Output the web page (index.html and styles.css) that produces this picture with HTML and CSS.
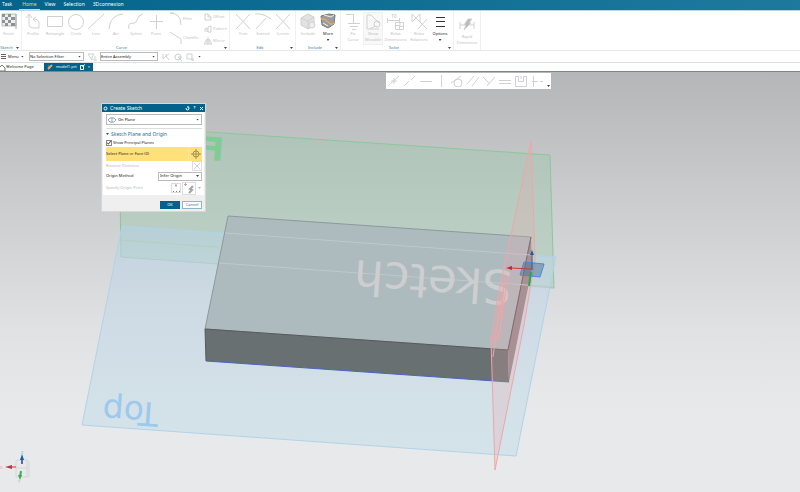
FILE: index.html
```html
<!DOCTYPE html>
<html lang="en">

<head>
    <meta charset="UTF-8">
    <meta name="viewport" content="width=device-width, initial-scale=1.0">
    <title>Create Sketch</title>
    <link rel="stylesheet" href="styles.css">
</head>

<body>
    <nav class="menu-tabs">
        <a href="#task" class="first">Task</a>
        <a href="#home" class="active">Home</a>
        <a href="#view">View</a>
        <a href="#selection">Selection</a>
        <a href="#connexion">3Dconnexion</a>
    </nav>

    <!-- Ribbon -->
    <header class="ribbon">
        <section class="group group-sketch">
            <div class="tools">
                <button class="tool"><svg width="16" height="17" viewBox="0 0 16 17"><path d="M1 1h14v12H1z" fill="#eee" stroke="#bbb"/><path d="M1 1h3v3H1zM7 1h3v3H7zM4 4h3v3H4zM10 4h4v3h-4zM1 7h3v3H1zM7 7h3v3H7zM4 10h3v3H4zM10 10h4v3h-4z" fill="#8f9193" stroke="none"/><path d="M15 1v15" stroke="#aaa"/></svg>Finish</button>
            </div>
            <h2>Sketch</h2><i class="corner"></i>
        </section>

        <section class="group group-curve">
            <div class="tools">
                <button class="tool wide"><svg width="16" height="17" viewBox="0 0 16 17"><path d="M4 2v9q0 4 5 4h5V9q-1-3-5-3M1 5l3-4 3 4M11 4L8 6l3 3"/></svg>Profile</button>
                <button class="tool wide"><svg width="16" height="17" viewBox="0 0 16 17"><path d="M.5 3.5h15v10H.5z"/></svg>Rectangle</button>
                <button class="tool"><svg width="16" height="17" viewBox="0 0 16 17"><circle cx="8" cy="9" r="7.5"/></svg>Circle</button>
                <button class="tool"><svg width="16" height="17" viewBox="0 0 16 17"><path d="M0 16L16 1"/></svg>Line</button>
                <button class="tool"><svg width="16" height="17" viewBox="0 0 16 17"><path d="M1 16Q2 2 15 1"/></svg>Arc</button>
                <button class="tool"><svg width="16" height="17" viewBox="0 0 16 17"><path d="M1 16C-1 6 7 14 9 7Q10 2 15 1"/></svg>Spline</button>
                <button class="tool"><svg width="16" height="17" viewBox="0 0 16 17"><path d="M8.5 2v14M2 8.5h13"/></svg>Point</button>
                <div class="stack stack-large">
                    <button><svg width="12" height="14" viewBox="0 0 12 14"><path d="M0 1q11 0 11 12M0 1h4"/></svg>Fillet</button>
                    <button><svg width="12" height="14" viewBox="0 0 12 14"><path d="M0 1l11 7v5"/></svg>Chamfer</button>
                </div>
                <div class="stack">
                    <button><svg width="8" height="8" viewBox="0 0 8 8"><path d="M1 1h3l3 3v3H1zM4 1v3h3"/></svg>Offset</button>
                    <button><svg width="8" height="8" viewBox="0 0 8 8"><path d="M1 7V4l2-1v4M4 7V2l3-1v6z"/></svg>Pattern</button>
                    <button><svg width="8" height="8" viewBox="0 0 8 8"><path d="M0 7l3-5v5zM4 0v8M5 7V2l3 5z"/></svg>Mirror</button>
                </div>
            </div>
            <h2>Curve</h2><i class="corner"></i>
        </section>

        <section class="group group-edit">
            <div class="tools">
                <button class="tool"><svg width="16" height="17" viewBox="0 0 16 17"><path d="M1 1l14 15M15 1L1 16"/></svg>Trim</button>
                <button class="tool"><svg width="16" height="17" viewBox="0 0 16 17"><path d="M1 16L11 5M0 1q8-1 16 5"/></svg>Extend</button>
                <button class="tool"><svg width="16" height="17" viewBox="0 0 16 17"><path d="M1 1l14 15M15 1L1 16"/></svg>Corner</button>
            </div>
            <h2>Edit</h2><i class="corner"></i>
        </section>

        <section class="group group-include">
            <div class="tools">
                <button class="tool"><svg width="16" height="17" viewBox="0 0 16 17"><path d="M1 5l7-4 6 3v9l-6 3-7-4z" fill="#e2e2e2"/><path d="M1 5l7 3 6-4M8 8v8"/><circle cx="12" cy="12" r="3" fill="#eee"/></svg>Include</button>
                <button class="tool enabled"><svg width="16" height="17" viewBox="0 0 16 17"><path d="M1 3l8-2 6 1-1 9-6 4-6-3z" fill="#9a9ea0" stroke="#777"/><path d="M1 5q4-1 7 3t6 1" stroke="#e08a6a"/><path d="M1 6q4-1 7 3t6 1" stroke="#e8c25c"/><path d="M4 2l7 2 3-2M3 10l5 3" stroke="#eee"/></svg>More<i class="drop"></i></button>
            </div>
            <h2>Include</h2><i class="corner"></i>
        </section>

        <section class="group group-solve">
            <div class="tools">
                <button class="tool"><svg width="16" height="17" viewBox="0 0 16 17"><path d="M1 1.5h7.5v9M3 10.5h12M5 13.5h8M7 16.5h4"/></svg>Fix<br>Curve</button>
                <button class="tool framed"><svg width="16" height="17" viewBox="0 0 16 17"><path d="M2 2h4l8 8M2 2v14h12M6 2l5 5"/><circle cx="12" cy="11" r="3"/><path d="M10 13l-5 3"/></svg>Show<br>Movable</button>
                <button class="tool dims"><svg width="20" height="17" viewBox="0 0 20 17"><text x="5" y="5" class="icon-text">10</text><path d="M1.5 5v5M13.5 5v4M1 7.5h12M9.5 9.5h8v7h-8zM9.5 12.5h4v4M14 9.5v4h4"/></svg>Relax<br>Dimensions</button>
                <button class="tool wide"><svg width="16" height="17" viewBox="0 0 16 17"><path d="M1 1v8l8-8v8zM5 5l11 11M16 6L7 16"/></svg>Relax<br>Relations</button>
                <button class="tool enabled"><svg width="16" height="17" viewBox="0 0 16 17"><path d="M4 4.5h9M4 8.5h9M4 13.5h9" stroke="#333"/></svg>Options<i class="drop"></i></button>
            </div>
            <h2>Solve</h2><i class="corner"></i>
        </section>

        <section class="group group-rapid">
            <div class="tools">
                <button class="tool rapid"><svg width="16" height="17" viewBox="0 0 16 17"><path d="M1 6v7M15 6v7M1 9h4M11 9h4"/><path d="M9 3h4l-3 4h2l-7 7 2-5H5z" fill="#bbb"/></svg>Rapid<br>Dimension</button>
            </div>
        </section>
    </header>

    <!-- Selection bar -->
    <div class="selection-bar">
        <button class="menu-button"><svg width="5" height="6" viewBox="0 0 5 6"><path d="M0 .5h5M0 2.5h5M0 4.5h5" stroke="#666"/></svg>Menu<i class="drop"></i></button>
        <label class="picker"><select aria-label="Selection filter"><option>No Selection Filter</option></select></label>
        <svg width="10" height="8" viewBox="0 0 10 8"><path d="M0 1h6L4 4v3L2 4zM7 3v4M5 7h4"/></svg>
        <label class="picker scope"><select aria-label="Selection scope"><option>Entire Assembly</option></select></label>
        <div class="bar-icons">
            <svg width="8" height="8" viewBox="0 0 8 8"><path d="M1 1v5l3-3 3 4M4 1v2l3-2"/></svg>
            <svg width="8" height="8" viewBox="0 0 8 8"><circle cx="4" cy="4" r="3"/><path d="M4 4l4 4M4 4h4"/></svg>
            <svg width="8" height="8" viewBox="0 0 8 8"><path d="M1 1h5v5H1zM5 7h3M7 5v3"/></svg>
            <i class="drop"></i>
        </div>
    </div>

    <nav class="file-tabs">
        <a href="#welcome"><svg width="6" height="7" viewBox="0 0 6 7"><path d="M0 3l2-2 3 3v3H0" stroke="#777"/></svg>Welcome Page</a>
        <a href="#model" class="current"><svg width="6" height="6" viewBox="0 0 6 6"><path d="M1 1l2 4" stroke="#58a"/><path d="M1 5l4-4" stroke="#f0a35a" stroke-width="2"/></svg>model1.prt<svg width="5" height="6" viewBox="0 0 5 6"><path d="M.5 1.5h3v4h-3zM2 2.5l3-2" stroke="#fff"/></svg><span>×</span></a>
    </nav>

    <main class="viewport">
        <svg class="scene" viewBox="0 72 800 420" preserveAspectRatio="xMinYMin slice">
            <defs>
                <linearGradient id="water" x1="0" y1="0" x2="0" y2="1">
                    <stop offset="0" stop-color="#b5d3e4" stop-opacity=".55"/>
                    <stop offset=".3" stop-color="#c5d8e6" stop-opacity=".65"/>
                    <stop offset="1" stop-color="#cadfe9" stop-opacity=".65"/>
                </linearGradient>
            </defs>

            <!-- datum planes -->
            <path d="M119 126L550 155l4 133-433-31z" fill="#9cc9ab" fill-opacity=".42" stroke="#8cc79b"/>
            <text class="plane-name front" transform="translate(223 161) rotate(4) scale(-1 1)">Front</text>
            <path d="M122 226l434 31-40 199-434-31z" fill="url(#water)" stroke="#afd3ea"/>
            <path d="M120 240l98 7" stroke="#b9cdb9"/>
            <text class="plane-name top" transform="translate(159 403) rotate(184)">Top</text>

            <!-- solid block -->
            <path d="M228 216l303 21-23 113-303-21z" fill="#adbabe" stroke="#8d9a9b"/>
            <path d="M205 329l303 21 1 32-303-21z" fill="#687071" stroke="none"/>
            <path d="M531 237l1 31-23 114-1-32z" fill="#92898c" stroke="none"/>
            <path d="M205 329l303 21 23-113" stroke="#59595d"/>
            <path d="M206 361l303 21" stroke="#4c63c4"/>
            <path d="M205 329l1 32" stroke="#555c60"/>
            <path d="M225 233l306 22M219 263l335 24" stroke="#c0c8ca"/>
            <text class="plane-name sketch" transform="translate(513 271) rotate(184)">Sketch</text>

            <!-- side plane, seen nearly edge on -->
            <path d="M531 141l-20 94-12 55-8 50 4 130 29-145 11-65z" fill="#eba6ad" fill-opacity=".25" stroke="#f0a6a8"/>
            <path d="M505 277l-5 38-8 28M504 282l-4 49-6 13M501 295l-8 62M508 276l-10 64" stroke="#eea7a5"/>

            <!-- csys at the corner -->
            <path d="M524 262l20 2-4 13-20-2z" fill="#4f7395" fill-opacity=".5" stroke="#478bd9"/>
            <path d="M510 268l22 1" stroke="#cf3945"/>
            <path d="M506 268l6-2v4z" fill="#c62835" stroke="none"/>
            <path d="M532 252v18" stroke="#245f9e"/>
            <path d="M530 255l2-5 2 5z" fill="#205da2" stroke="none"/>
            <path d="M531 272l-2 14" stroke="#27a650" stroke-width="2"/>

            <!-- view triad -->
            <path d="M16 461l2-1h9l2 2v14l-2 1H16zM27 460v17M16 468h12" stroke="#d3d6d8"/>
            <path d="M22 464v-6" stroke="#5569ad" stroke-width="2"/>
            <path d="M20 460l2-6 2 6z" fill="#11629b" stroke="none"/>
            <path d="M16 467H8" stroke="#c23643"/>
            <path d="M5 467l7-2v4z" fill="#c23643" stroke="none"/>
            <path d="M21 471l-1 6" stroke="#38ad50" stroke-width="2"/>
            <path d="M18 475h4l-2 5z" fill="#38ad50" stroke="none"/>
            <text class="axis x" x="0" y="469">X</text>
            <text class="axis y" x="18" y="483">Y</text>
            <text class="axis z" x="21" y="454">Z</text>
        </svg>

        <div class="snap-bar">
            <svg width="12" height="12" viewBox="0 0 12 12"><path d="M0 11L11 1M3 6h6M6 3v6"/></svg>
            <svg width="12" height="12" viewBox="0 0 12 12"><path d="M0 11l5-5M7 5l4-4"/></svg>
            <svg width="12" height="12" viewBox="0 0 12 12"><path d="M0 6.5h12"/></svg>
            <i class="split"></i>
            <svg width="12" height="12" viewBox="0 0 12 12"><circle cx="7" cy="8" r="4"/><path d="M0 8l10-7"/></svg>
            <svg width="12" height="12" viewBox="0 0 12 12"><path d="M0 9l7-8M5 11l7-9"/></svg>
            <svg width="12" height="12" viewBox="0 0 12 12"><path d="M0 2l7 7M4 11l8-9"/></svg>
            <svg width="12" height="12" viewBox="0 0 12 12"><path d="M0 5.5h12M0 8.5h12"/></svg>
            <svg width="12" height="12" viewBox="0 0 12 12"><path d="M.5 1.5h3v5h5v-5h3v10H.5zM6 1v3"/></svg>
            <svg width="12" height="12" viewBox="0 0 12 12"><path d="M2.5 1v11M1 6.5h6M9 6.5h3"/></svg>
            <i class="drop"></i>
        </div>

        <form class="dialog">
            <header class="dialog-title">
                <svg width="5" height="5" viewBox="0 0 5 5"><circle cx="2.5" cy="2.5" r="1.5" stroke="#fff"/></svg>
                <h1>Create Sketch</h1>
                <button type="button" aria-label="Reset"><svg width="5" height="5" viewBox="0 0 5 5"><path d="M1 2q0 2 1.5 2T4 2 2 1" stroke="#fff"/></svg></button>
                <button type="button">?</button>
                <button type="button" aria-label="Close"><svg width="5" height="5" viewBox="0 0 5 5"><path d="M1 1l3 3M4 1L1 4" stroke="#fff"/></svg></button>
            </header>
            <div class="dialog-body">
                <label class="picker type">
                    <svg width="8" height="6" viewBox="0 0 8 6"><path d="M0 3l2-2h4l2 2-2 2H2zM4 0v6" stroke="#8fadb2"/></svg>
                    <select aria-label="Sketch type"><option>On Plane</option></select>
                </label>
                <hr>
                <h3><i class="drop"></i>Sketch Plane and Origin</h3>
                <label class="check"><input type="checkbox" checked>Show Principal Planes</label>
                <div class="row selected">
                    <span>Select Plane or Face (0)</span>
                    <button type="button" aria-label="Select plane"><svg width="10" height="10" viewBox="0 0 10 10"><circle cx="5" cy="5" r="3" stroke="#a58d50"/><path d="M5 0v10M0 5h10" stroke="#a58d50"/></svg></button>
                </div>
                <div class="row disabled">
                    <span>Reverse Direction</span>
                    <button type="button" class="boxed" aria-label="Reverse direction"><svg width="8" height="8" viewBox="0 0 8 8"><path d="M1 1l6 6M7 1L1 7"/></svg></button>
                </div>
                <div class="row">
                    <label for="origin">Origin Method</label>
                    <span class="picker origin"><select id="origin"><option>Infer Origin</option></select></span>
                </div>
                <div class="row disabled tall">
                    <span>Specify Origin Point</span>
                    <div class="point-tools">
                        <button type="button" class="boxed" aria-label="Point dialog"><svg width="8" height="10" viewBox="0 0 8 10"><path d="M3 2.5h2M4 1v3" stroke="#d79aa2"/><path d="M1 8.5h1M4 8.5h1M7 8.5h1" stroke="#777"/></svg></button>
                        <button type="button" class="boxed infer" aria-label="Inferred point"><svg width="12" height="12" viewBox="0 0 12 12"><path d="M1 2.5h3M2.5 1v3" stroke="#d79aa2"/><path d="M10 4L7 7l2 1-3 3" stroke="#a5a5a5" stroke-width="2"/></svg></button>
                        <i class="drop"></i>
                    </div>
                </div>
            </div>
            <footer>
                <button type="button" class="ok">OK</button>
                <button type="button" class="cancel">Cancel</button>
            </footer>
        </form>
    </main>
</body>

</html>
```

FILE: styles.css
```css
* {
    box-sizing: border-box;
}

body {
    margin: 0;
    min-height: 100vh;
    display: flex;
    flex-direction: column;
    background: #fff;
    color: #222;
    font-family: "Noto Sans", "Open Sans", sans-serif;
    font-size: 4px;
    line-height: 6px;
}

button {
    display: flex;
    align-items: center;
    padding: 0;
    border: 0;
    background: none;
    color: inherit;
    font: inherit;
}

a {
    color: inherit;
    text-decoration: none;
}

h1, h2, h3 {
    margin: 0;
    font-weight: normal;
}

svg {
    flex: none;
    fill: none;
    stroke: #cfd1d2;
}

.drop {
    flex: none;
    width: 3px;
    height: 2px;
    background: #444;
    clip-path: polygon(0 0, 100% 0, 50% 100%);
}

/* top menu */
.menu-tabs {
    display: flex;
    gap: 2px;
    height: 11px;
    background: linear-gradient(90deg, #04648b, #1d7a9d);
    border-bottom: 1px solid #b9d3df;
    color: #fff;
    font-size: 5px;
    line-height: 9px;
}

.menu-tabs a {
    padding: 0 3px;
}

.menu-tabs .first {
    padding: 0 5px 0 2px;
}

.menu-tabs .active {
    color: #f3d774;
    border-bottom: 1px solid #f3d774;
}

/* ribbon */
.ribbon {
    display: flex;
    height: 40px;
    border-bottom: 1px solid #e6e7e8;
}

.group {
    position: relative;
    display: flex;
    flex-direction: column;
    justify-content: space-between;
    border-right: 1px solid #f0f0f1;
}

.group h2 {
    padding-right: 8px;
    color: #31809c;
    font-size: 4px;
    line-height: 4px;
    text-align: center;
}

.corner {
    position: absolute;
    right: 2px;
    bottom: 1px;
    width: 3px;
    height: 2px;
    background: #444;
    clip-path: polygon(0 0, 100% 0, 50% 100%);
}

.group-sketch {
    width: 22px;
}

.group-curve {
    width: 208px;
}

.group-edit {
    width: 66px;
    padding-left: 3px;
}

.group-include {
    width: 45px;
    padding-left: 2px;
}

.group-solve {
    width: 113px;
    padding-left: 2px;
}

.group-rapid {
    width: 27px;
}

.tools {
    display: flex;
    height: 34px;
    padding-top: 1px;
}

.tool {
    flex: none;
    flex-direction: column;
    width: 20px;
    color: #bfc0c1;
    text-align: center;
    padding-top: 1px;
}

.group-sketch .tool {
    width: 17px;
}

.tool.wide {
    width: 22px;
}

.tool.dims {
    width: 25px;
}

.tool.rapid {
    width: 26px;
    padding-top: 4px;
}

.tool svg {
    margin-bottom: 1px;
}

.tool.enabled {
    color: #222;
}

.enabled .drop {
    margin-top: 2px;
}

.framed {
    background: #f8f8f8;
    border: 1px solid #efefef;
}

.framed svg {
    margin-top: -1px;
}

.icon-text {
    fill: #b9bbbc;
    stroke: none;
    font-size: 5px;
}

.stack {
    display: flex;
    flex-direction: column;
    justify-content: space-between;
    padding: 1px 0 0 5px;
    color: #bfc0c1;
}

.stack button {
    gap: 1px;
}

.stack-large {
    width: 33px;
    padding: 0 0 0 4px;
}

/* selection bar */
.selection-bar {
    display: flex;
    align-items: center;
    height: 12px;
    border-bottom: 1px solid #dedfe0;
}

.menu-button {
    gap: 2px;
    width: 29px;
    padding-left: 1px;
}

.picker {
    position: relative;
    display: flex;
    align-items: center;
    width: 55px;
    height: 9px;
    border: 1px solid #b9babb;
    background: #fff;
}

.picker::after {
    content: "";
    position: absolute;
    right: 2px;
    width: 3px;
    height: 2px;
    background: #444;
    clip-path: polygon(0 0, 100% 0, 50% 100%);
}

.picker select {
    flex: 1;
    min-width: 0;
    appearance: none;
    border: 0;
    padding: 0;
    background: none;
    color: #111;
    font: inherit;
}

.selection-bar > svg {
    margin: 0 2px 0 4px;
}

.scope {
    width: 58px;
    margin-right: 4px;
}

.bar-icons {
    display: flex;
    align-items: center;
    gap: 4px;
}

/* open files */
.file-tabs {
    display: flex;
    height: 9px;
    border-bottom: 1px solid #4e98a5;
    line-height: 8px;
}

.file-tabs a {
    display: flex;
    align-items: center;
    width: 44px;
}

.file-tabs .current {
    justify-content: space-between;
    width: 49px;
    padding: 0 3px;
    background: #04618a;
    color: #fff;
}

/* model view */
.viewport {
    position: relative;
    flex: 1;
    display: flex;
    overflow: hidden;
    background: linear-gradient(#b5b6b8, #cbccce 30%, #e0e1e3 61%, #e7e9ea 80%);
}

.scene {
    flex: 1;
    width: 100%;
    min-height: 0;
}

.scene path {
    vector-effect: non-scaling-stroke;
}

.plane-name {
    stroke: none;
    font-family: "DejaVu Sans", sans-serif;
}

.front {
    fill: #80cc94;
    font-size: 32px;
    font-weight: bold;
}

.top {
    fill: #9cc9ec;
    font-size: 33px;
}

.sketch {
    fill: #ccced0;
    font-size: 47px;
}

.axis {
    stroke: none;
    font-size: 4px;
}

.x {
    fill: #e09aa2;
}

.y {
    fill: #92c59a;
}

.z {
    fill: #7eaede;
}

.snap-bar {
    position: absolute;
    top: 1px;
    left: 386px;
    display: flex;
    align-items: center;
    gap: 4px;
    height: 16px;
    padding: 0 1px 0 2px;
    background: #fff;
}

.split {
    width: 1px;
    height: 12px;
    margin: 0 5px;
    background: #d3d4d5;
}

.snap-bar .drop {
    align-self: flex-end;
    margin-bottom: 2px;
}

/* create sketch dialog */
.dialog {
    position: absolute;
    top: 31px;
    left: 101px;
    width: 105px;
    border: 1px solid #d4d6d7;
    background: #efefef;
}

.dialog-title {
    display: flex;
    align-items: center;
    gap: 2px;
    height: 8px;
    padding: 0 1px;
    background: #04618a;
    color: #fff;
}

.dialog-title h1 {
    flex: 1;
    font-size: 5px;
    line-height: 8px;
}

.dialog-title button {
    justify-content: center;
    width: 5px;
    font-weight: bold;
}

.dialog-body {
    margin: 0 1px;
    padding: 2px 2px 0 3px;
    background: #fff;
}

.type {
    width: 100%;
    height: 11px;
    gap: 2px;
    padding-left: 1px;
}

.dialog hr {
    margin: 3px 0 1px;
    border: 0;
    border-top: 1px solid #dcdddd;
}

.dialog h3 {
    display: flex;
    align-items: center;
    gap: 2px;
    color: #1d7296;
    font-size: 5px;
    line-height: 8px;
}

.dialog h3 .drop {
    background: #04618a;
}

.check {
    display: flex;
    align-items: center;
    gap: 1px;
    height: 9px;
}

.check input {
    appearance: none;
    width: 6px;
    height: 6px;
    margin: 0;
    border: 1px solid #888;
}

.check input:checked::after {
    content: "";
    display: block;
    width: 4px;
    height: 4px;
    background: #333;
    clip-path: polygon(0 50%, 35% 75%, 90% 0, 100% 20%, 40% 100%, 0 70%);
}

.row {
    display: flex;
    align-items: center;
    justify-content: space-between;
    height: 10px;
}

.row.selected {
    height: 14px;
    background: #ffe07a;
}

.selected button {
    justify-content: center;
    width: 14px;
    height: 14px;
    border-left: 1px solid #f5e6b0;
}

.disabled {
    color: #b5b6b7;
}

.row.tall {
    height: 14px;
}

.boxed {
    justify-content: center;
    width: 10px;
    height: 10px;
    border: 1px solid #dcdddd;
}

.boxed.infer {
    width: 14px;
    height: 13px;
}

.point-tools {
    display: flex;
    align-items: center;
    gap: 1px;
}

.point-tools .drop {
    margin: 0 1px;
    background: #bbb;
}

.origin {
    width: 44px;
    padding-left: 1px;
}

.dialog footer {
    display: flex;
    justify-content: flex-end;
    gap: 2px;
    padding: 6px 3px 2px;
}

.dialog footer button {
    justify-content: center;
    width: 20px;
    height: 8px;
    border: 1px solid #8db7c7;
    background: #fff;
    color: #31708a;
}

.dialog footer .ok {
    border-color: #04618a;
    background: #04618a;
    color: #fff;
}
```
